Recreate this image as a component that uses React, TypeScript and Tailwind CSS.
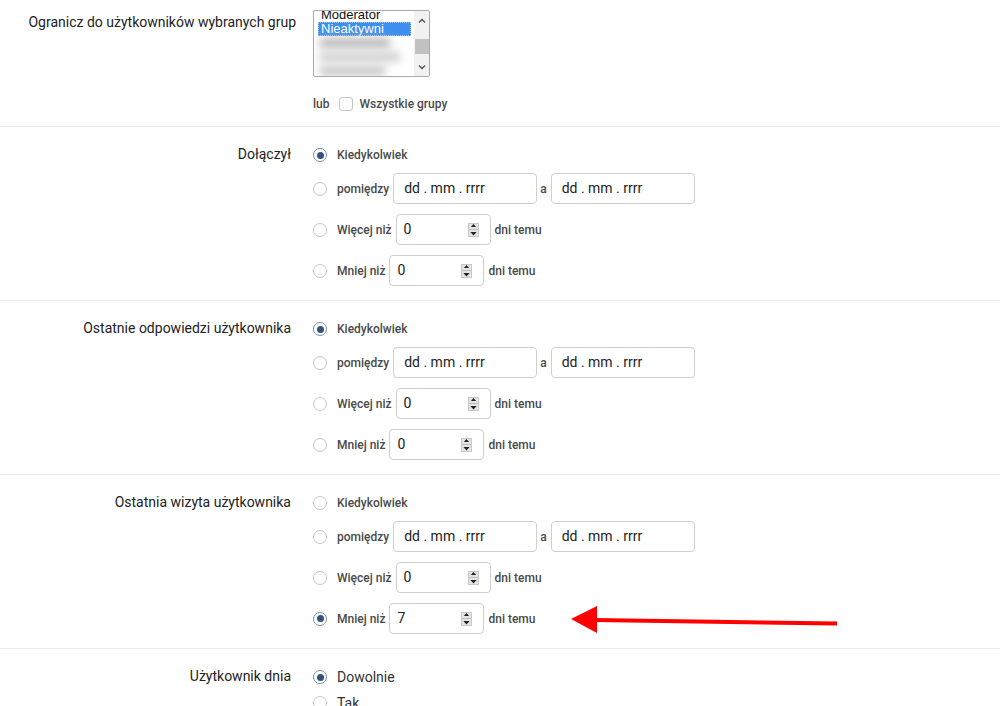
import React from 'react'

function Radio({ checked }: { checked?: boolean }) {
  return (
    <span
      className={`w-[14px] h-[14px] rounded-full border bg-white flex items-center justify-center shrink-0 ${
        checked ? 'border-[#7d8fa8]' : 'border-[#c6c6c6]'
      }`}
    >
      {checked && <span className="w-[7px] h-[7px] rounded-full bg-[#34527f]" />}
    </span>
  )
}

function DateBox() {
  return (
    <div className="w-[144px] h-[31px] border border-[#cfcfcf] rounded-[4px] pl-[10px] flex items-center text-[14px] font-normal text-[#222]">
      dd . mm . rrrr
    </div>
  )
}

function Spinner() {
  return (
    <span className="w-[11px] h-[14px] border border-[#c8c8c8] bg-[#e4e4e4] flex flex-col items-center justify-center gap-[2px]">
      <svg width="7" height="4" viewBox="0 0 7 4"><path d="M3.5 0L7 4H0z" fill="#222" /></svg>
      <span className="w-full h-px bg-[#bdbdbd]" />
      <svg width="7" height="4" viewBox="0 0 7 4"><path d="M0 0h7L3.5 4z" fill="#222" /></svg>
    </span>
  )
}

function NumBox({ value }: { value: string }) {
  return (
    <div className="w-[95px] h-[31px] border border-[#cfcfcf] rounded-[4px] pl-[7px] pr-[11px] flex items-center justify-between text-[14px] font-normal text-[#222]">
      <span>{value}</span>
      <Spinner />
    </div>
  )
}

function DateFilter({ checked }: { checked: 'any' | 'between' | 'more' | 'less' }) {
  return (
    <div className="flex flex-col gap-[10px]">
      <div className="flex items-center h-4">
        <Radio checked={checked === 'any'} />
        <span className="ml-[10px]">Kiedykolwiek</span>
      </div>
      <div className="flex items-center h-[31px]">
        <Radio checked={checked === 'between'} />
        <span className="ml-[10px] mr-1">pomiędzy</span>
        <DateBox />
        <span className="ml-[3px] mr-[4px]">a</span>
        <DateBox />
      </div>
      <div className="flex items-center h-[31px]">
        <Radio checked={checked === 'more'} />
        <span className="ml-[10px] mr-1">Więcej niż</span>
        <NumBox value="0" />
        <span className="ml-[4px]">dni temu</span>
      </div>
      <div className="flex items-center h-[31px]">
        <Radio checked={checked === 'less'} />
        <span className="ml-[10px] mr-1">Mniej niż</span>
        <NumBox value={checked === 'less' ? '7' : '0'} />
        <span className="ml-[4px]">dni temu</span>
      </div>
    </div>
  )
}

function Section({ label, children, first, labelCls = 'w-[291px] pt-[17px]', bodyCls = 'ml-[22px] pt-[20px] pb-[14px]' }: {
  label: string
  children: React.ReactNode
  first?: boolean
  labelCls?: string
  bodyCls?: string
}) {
  return (
    <div className={`flex ${first ? '' : 'border-t border-[#ececec]'}`}>
      <div className={`shrink-0 text-right text-[14px] leading-5 text-[#222] whitespace-nowrap ${labelCls}`}>{label}</div>
      <div className={`text-[12px] font-medium text-[#4a4a4a] ${bodyCls}`}>{children}</div>
    </div>
  )
}

export default function App() {
  return (
    <div className="relative w-[1000px] h-[706px] overflow-hidden bg-white font-['Roboto',sans-serif]">
      <Section
        label="Ogranicz do użytkowników wybranych grup"
        first
        labelCls="w-[296px] pt-[12px]"
        bodyCls="ml-[17px] pt-[10px] pb-[14px]"
      >
        {/* group listbox */}
        <div className="w-[117px] h-[67px] border border-[#a9a9a9] rounded-[2px] flex overflow-hidden font-['Liberation_Sans',sans-serif] text-[13px] font-normal text-[#111]">
          <div className="flex-1 pl-[4px] pr-[3px] -mt-[3px] leading-[14px]">
            <div className="pl-[3px]">Moderator</div>
            <div className="pl-[3px] bg-[#3d8ff0] text-white outline outline-1 outline-dotted outline-[#9cc6f8] -outline-offset-1">Nieaktywni</div>
            <div className="mt-[2px] ml-[2px] h-[10px] w-[70px] bg-[#b8b8b8] blur-[4px]" />
            <div className="mt-[4px] ml-[2px] h-[10px] w-[80px] bg-[#d0d0d0] blur-[4px]" />
            <div className="mt-[4px] ml-[2px] h-[10px] w-[65px] bg-[#c8c8c8] blur-[4px]" />
          </div>
          <div className="w-[15px] bg-[#f1f1f1] flex flex-col items-center pt-[7px] pb-[6px]">
            <svg width="8" height="5" viewBox="0 0 8 5"><path d="M1 4.5L4 1.5L7 4.5" stroke="#555" strokeWidth="1.5" fill="none" /></svg>
            <div className="w-[14px] h-[15px] bg-[#c1c1c1] mt-[16px]" />
            <div className="flex-1" />
            <svg width="8" height="5" viewBox="0 0 8 5"><path d="M1 0.5L4 3.5L7 0.5" stroke="#555" strokeWidth="1.5" fill="none" /></svg>
          </div>
        </div>
        <div className="flex items-center h-4 mt-[19px]">
          <span>lub</span>
          <span className="ml-[10px] w-[14px] h-[14px] border border-[#c6c6c6] rounded-[3px] bg-white" />
          <span className="ml-[6px]">Wszystkie grupy</span>
        </div>
      </Section>

      <Section label="Dołączył">
        <DateFilter checked="any" />
      </Section>

      <Section label="Ostatnie odpowiedzi użytkownika">
        <DateFilter checked="any" />
      </Section>

      <Section label="Ostatnia wizyta użytkownika">
        <DateFilter checked="less" />
      </Section>

      <Section label="Użytkownik dnia">
        <div className="flex flex-col gap-[10px] text-[14px] font-normal text-[#333]">
          <div className="flex items-center h-4">
            <Radio checked />
            <span className="ml-[10px]">Dowolnie</span>
          </div>
          <div className="flex items-center h-4">
            <Radio />
            <span className="ml-[10px]">Tak</span>
          </div>
        </div>
      </Section>

      {/* red annotation arrow */}
      <svg className="absolute left-0 top-0 pointer-events-none" width="1000" height="706">
        <line x1="594" y1="620" x2="837" y2="623.5" stroke="#ff0000" strokeWidth="4" />
        <polygon points="571,619 597,606 597,633" fill="#ff0000" />
      </svg>
    </div>
  )
}
